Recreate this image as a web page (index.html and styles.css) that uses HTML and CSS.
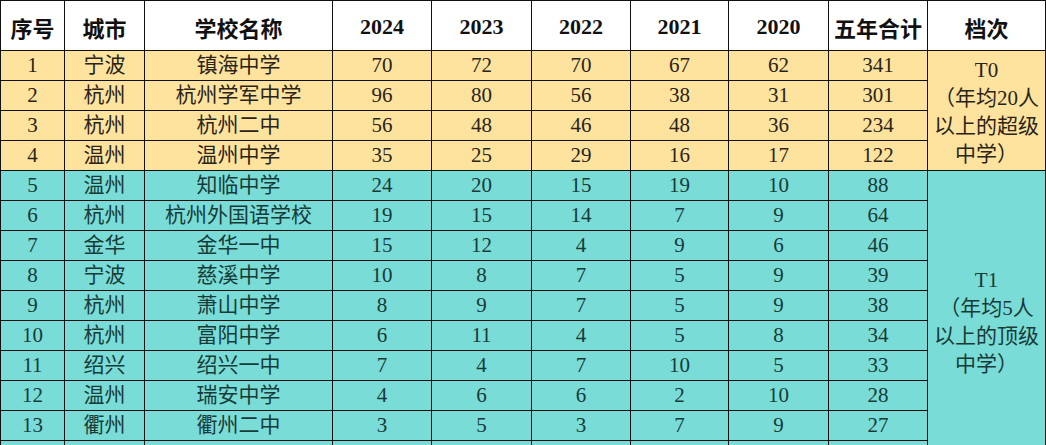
FILE: index.html
```html
<!DOCTYPE html>
<html lang="zh-CN">
<head>
<meta charset="utf-8">
<title>五年合计</title>
<link rel="stylesheet" href="styles.css">
</head>
<body>
<table class="rank">
<colgroup>
<col class="c-no"><col class="c-city"><col class="c-school">
<col class="c-y1"><col class="c-y2"><col class="c-y3"><col class="c-y4"><col class="c-y5">
<col class="c-sum"><col class="c-tier">
</colgroup>
<thead>
<tr class="head"><th>序号</th><th>城市</th><th>学校名称</th><th>2024</th><th>2023</th><th>2022</th><th>2021</th><th>2020</th><th>五年合计</th><th>档次</th></tr>
</thead>
<tbody>
<tr class="t0"><td>1</td><td>宁波</td><td>镇海中学</td><td>70</td><td>72</td><td>70</td><td>67</td><td>62</td><td>341</td><td class="tier" rowspan="4">T0<br>（年均20人<br>以上的超级<br>中学）</td></tr>
<tr class="t0"><td>2</td><td>杭州</td><td>杭州学军中学</td><td>96</td><td>80</td><td>56</td><td>38</td><td>31</td><td>301</td></tr>
<tr class="t0"><td>3</td><td>杭州</td><td>杭州二中</td><td>56</td><td>48</td><td>46</td><td>48</td><td>36</td><td>234</td></tr>
<tr class="t0"><td>4</td><td>温州</td><td>温州中学</td><td>35</td><td>25</td><td>29</td><td>16</td><td>17</td><td>122</td></tr>
<tr class="t1"><td>5</td><td>温州</td><td>知临中学</td><td>24</td><td>20</td><td>15</td><td>19</td><td>10</td><td>88</td><td class="tier" rowspan="10">T1<br>（年均5人<br>以上的顶级<br>中学）</td></tr>
<tr class="t1"><td>6</td><td>杭州</td><td>杭州外国语学校</td><td>19</td><td>15</td><td>14</td><td>7</td><td>9</td><td>64</td></tr>
<tr class="t1"><td>7</td><td>金华</td><td>金华一中</td><td>15</td><td>12</td><td>4</td><td>9</td><td>6</td><td>46</td></tr>
<tr class="t1"><td>8</td><td>宁波</td><td>慈溪中学</td><td>10</td><td>8</td><td>7</td><td>5</td><td>9</td><td>39</td></tr>
<tr class="t1"><td>9</td><td>杭州</td><td>萧山中学</td><td>8</td><td>9</td><td>7</td><td>5</td><td>9</td><td>38</td></tr>
<tr class="t1"><td>10</td><td>杭州</td><td>富阳中学</td><td>6</td><td>11</td><td>4</td><td>5</td><td>8</td><td>34</td></tr>
<tr class="t1"><td>11</td><td>绍兴</td><td>绍兴一中</td><td>7</td><td>4</td><td>7</td><td>10</td><td>5</td><td>33</td></tr>
<tr class="t1"><td>12</td><td>温州</td><td>瑞安中学</td><td>4</td><td>6</td><td>6</td><td>2</td><td>10</td><td>28</td></tr>
<tr class="t1"><td>13</td><td>衢州</td><td>衢州二中</td><td>3</td><td>5</td><td>3</td><td>7</td><td>9</td><td>27</td></tr>
<tr class="t1 tail"><td></td><td></td><td></td><td></td><td></td><td></td><td></td><td></td><td></td></tr>
</tbody>
</table>
</body>
</html>
```

FILE: styles.css
```css
html, body {
  margin: 0;
  padding: 0;
  overflow: hidden;
  background: #ffffff;
}

.rank {
  border-collapse: collapse;
  table-layout: fixed;
  width: 1045px;
  font-family: "Liberation Serif", "Noto Sans CJK SC", serif;
  font-size: 21px;
  color: #1e1e1e;
}

.c-no { width: 64px; }
.c-city { width: 80px; }
.c-school { width: 188px; }
.c-y1 { width: 99px; }
.c-y2 { width: 100px; }
.c-y3 { width: 99px; }
.c-y4 { width: 98px; }
.c-y5 { width: 100px; }
.c-sum { width: 99px; }
.c-tier { width: 118px; }

.rank th,
.rank td {
  border: 1px solid #111;
  padding: 0;
  text-align: center;
  vertical-align: middle;
  white-space: nowrap;
}

.head th {
  height: 47px;
  padding-top: 2px;
  font-weight: bold;
  font-size: 22px;
  background: #ffffff;
  color: #111;
}

.rank td {
  height: 29px;
  line-height: 29px;
}

.t0 td { background: #fde39e; color: #2a2418; }
.t1 td { background: #7adcd6; color: #173b38; }

.rank td.tier {
  line-height: 28px;
  vertical-align: middle;
  padding-top: 2px;
}
```
